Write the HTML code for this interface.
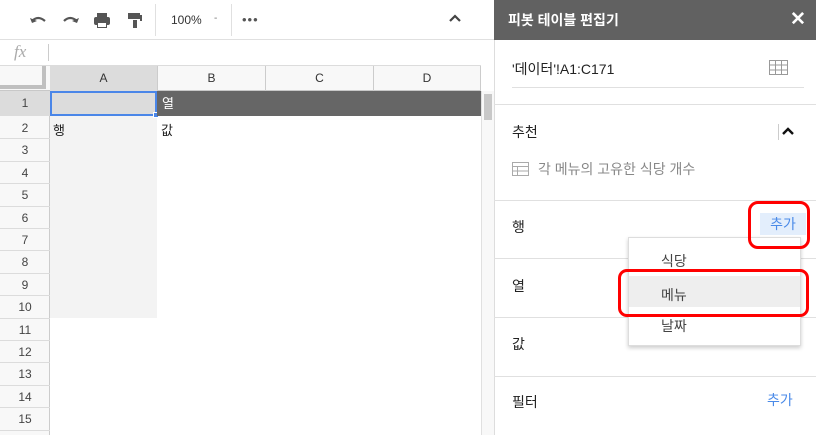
<!DOCTYPE html>
<html><head><meta charset="utf-8"><style>
*{margin:0;padding:0;box-sizing:border-box}
html,body{width:816px;height:435px;overflow:hidden}
body{background:#fff;font-family:"Liberation Sans","Noto Sans CJK KR",sans-serif;position:relative}
.a{position:absolute}
.rh{position:absolute;left:0;width:50px;text-align:center;font-size:12px;color:#444;border-bottom:1px solid #dcdcdc}
.t{font-size:13px;color:#222}
</style></head><body>
<div class="a" style="left:0;top:0;width:494px;height:40px;border-bottom:1px solid #e0e0e0"></div>
<div class="a" style="left:155px;top:4px;width:1px;height:32px;background:#e0e0e0"></div>
<div class="a" style="left:231px;top:4px;width:1px;height:32px;background:#e0e0e0"></div>
<svg class="a" style="left:28px;top:10px" width="130" height="20" viewBox="0 0 130 20">
<path d="M4 11 Q10 5 17 11" stroke="#555" stroke-width="2.2" fill="none"/><path d="M2 8 L4 13 L9 11" fill="#555"/>
<path d="M36 11 Q42 5 49 11" stroke="#555" stroke-width="2.2" fill="none"/><path d="M51 8 L49 13 L44 11" fill="#555"/>
<rect x="66" y="7" width="16" height="8" rx="2" fill="#555"/><rect x="69" y="3" width="10" height="4" fill="#555"/><rect x="69" y="12" width="10" height="6" fill="#555"/><rect x="70" y="13" width="8" height="4" fill="#fff"/>
<rect x="100" y="3" width="12" height="6" fill="#555"/><rect x="112" y="5" width="2" height="6" fill="#555"/><rect x="105" y="10" width="4" height="8" fill="#555"/>
</svg>
<div class="a" style="left:171px;top:13px;font-size:12px;color:#333">100%</div>
<div class="a" style="left:214px;top:13px;font-size:10px;color:#777">-</div>
<div class="a" style="left:242px;top:12px;font-size:13px;color:#555;letter-spacing:1px">•••</div>
<svg class="a" style="left:448px;top:13px" width="14" height="10"><path d="M2 8 L7 3 L12 8" stroke="#444" stroke-width="2.2" fill="none"/></svg>
<div class="a" style="left:0;top:40px;width:481px;height:26px;border-bottom:1px solid #dcdcdc"></div>
<div class="a" style="left:14px;top:42px;font-family:'Liberation Serif',serif;font-style:italic;font-size:17px;color:#aaa">fx</div>
<div class="a" style="left:48px;top:44px;width:1px;height:17px;background:#ccc"></div>
<div class="a" style="left:0;top:66px;width:481px;height:25px;background:#f8f8f8;border-bottom:1px solid #c8c8c8"></div>
<div class="a" style="left:0;top:66px;width:46px;height:23px;border-right:4px solid #c0c0c0;border-bottom:4px solid #c0c0c0"></div>
<div class="a" style="left:50px;top:66px;width:107px;height:25px;background:#dcdcdc;text-align:center;font-size:12px;line-height:25px;color:#333">A</div>
<div class="a" style="left:157px;top:66px;width:108px;height:25px;border-left:1px solid #ccc;text-align:center;font-size:12px;line-height:25px;color:#333">B</div>
<div class="a" style="left:265px;top:66px;width:108px;height:25px;border-left:1px solid #ccc;text-align:center;font-size:12px;line-height:25px;color:#333">C</div>
<div class="a" style="left:373px;top:66px;width:108px;height:25px;border-left:1px solid #ccc;border-right:1px solid #ccc;text-align:center;font-size:12px;line-height:25px;color:#333">D</div>
<div class="a" style="left:0;top:91px;width:50px;height:344px;background:#f8f8f8;border-right:1px solid #ccc"></div>
<div class="rh" style="top:91px;height:25px;line-height:25px;background:#dcdcdc">1</div>
<div id="rows"></div>
<script>
var h='';for(var i=2;i<=15;i++){var t=117+(i-2)*22.4;h+='<div class="rh" style="top:'+t+'px;height:22.4px;line-height:22px">'+i+'</div>';}
document.getElementById('rows').innerHTML=h;
</script>
<div class="a" style="left:50px;top:116px;width:107px;height:202px;background:#f3f3f3"></div>
<div class="a" style="left:50px;top:91px;width:107px;height:25px;background:#dcdcdc;border:2px solid #4a86e8"></div>
<div class="a" style="left:153px;top:112px;width:6px;height:6px;background:#4a86e8;border:1px solid #fff"></div>
<div class="a" style="left:157px;top:91px;width:324px;height:25px;background:#666;color:#fff;font-size:13px;line-height:25px;padding-left:5px">열</div>
<div class="a t" style="left:53px;top:120px">행</div>
<div class="a t" style="left:161px;top:120px">값</div>
<div class="a" style="left:481px;top:91px;width:13px;height:344px;background:#f8f8f8;border-left:1px solid #e0e0e0"></div>
<div class="a" style="left:484px;top:94px;width:8px;height:26px;background:#c8c8c8"></div>
<div class="a" style="left:494px;top:0;width:322px;height:435px;background:#fff;border-left:1px solid #ddd"></div>
<div class="a" style="left:494px;top:0;width:322px;height:40px;background:#616161;color:#fff;font-size:14px;font-weight:bold;line-height:40px;padding-left:14px">피봇 테이블 편집기</div>
<div class="a" style="left:790px;top:8px;color:#fff;font-size:19px;font-weight:bold">✕</div>
<div class="a t" style="left:512px;top:59px;font-size:14px">'데이터'!A1:C171</div>
<svg class="a" style="left:769px;top:60px" width="19" height="16"><g stroke="#999" fill="none"><rect x="0.5" y="0.5" width="18" height="14"/><path d="M0 5h19M0 10h19M6.5 0v15M12.5 0v15"/></g></svg>
<div class="a" style="left:512px;top:87px;width:292px;height:1px;background:#e0e0e0"></div>
<div class="a" style="left:494px;top:104px;width:322px;height:1px;background:#e0e0e0"></div>
<div class="a t" style="left:512px;top:122px;font-size:14px">추천</div>
<div class="a" style="left:778px;top:124px;width:1px;height:16px;background:#ccc"></div>
<svg class="a" style="left:781px;top:126px" width="14" height="10"><path d="M2 8 L7 3 L12 8" stroke="#111" stroke-width="2.4" fill="none"/></svg>
<svg class="a" style="left:512px;top:162px" width="17" height="14"><g stroke="#aaa" fill="none"><rect x="0.5" y="0.5" width="16" height="13"/><path d="M0 4.5h17M0 9h17M5.5 4v10"/></g></svg>
<div class="a" style="left:538px;top:159px;font-size:14px;color:#888">각 메뉴의 고유한 식당 개수</div>
<div class="a" style="left:494px;top:200px;width:322px;height:1px;background:#e0e0e0"></div>
<div class="a t" style="left:512px;top:217px;font-size:14px">행</div>
<div class="a" style="left:760px;top:213px;width:46px;height:22px;background:#e3eefc;color:#4a8ae8;font-size:14px;line-height:22px;text-align:center">추가</div>
<div class="a" style="left:494px;top:258px;width:322px;height:1px;background:#e0e0e0"></div>
<div class="a t" style="left:512px;top:276px;font-size:14px">열</div>
<div class="a" style="left:494px;top:317px;width:322px;height:1px;background:#e0e0e0"></div>
<div class="a t" style="left:512px;top:334px;font-size:14px">값</div>
<div class="a" style="left:494px;top:376px;width:322px;height:1px;background:#e0e0e0"></div>
<div class="a t" style="left:512px;top:392px;font-size:14px">필터</div>
<div class="a" style="left:767px;top:390px;font-size:14px;color:#4a8ae8">추가</div>
<div class="a" style="left:628px;top:237px;width:173px;height:109px;background:#fff;border:1px solid #ddd;box-shadow:0 2px 4px rgba(0,0,0,.2)"></div>
<div class="a" style="left:629px;top:276px;width:171px;height:31px;background:#eee"></div>
<div class="a" style="left:661px;top:251px;font-size:14px;color:#444">식당</div>
<div class="a" style="left:661px;top:285px;font-size:14px;color:#444">메뉴</div>
<div class="a" style="left:661px;top:316px;font-size:14px;color:#444">날짜</div>
<div class="a" style="left:748px;top:201px;width:62px;height:48px;border:3px solid #f00;border-radius:10px"></div>
<div class="a" style="left:618px;top:269px;width:191px;height:48px;border:3px solid #f00;border-radius:9px"></div>
</body></html>
